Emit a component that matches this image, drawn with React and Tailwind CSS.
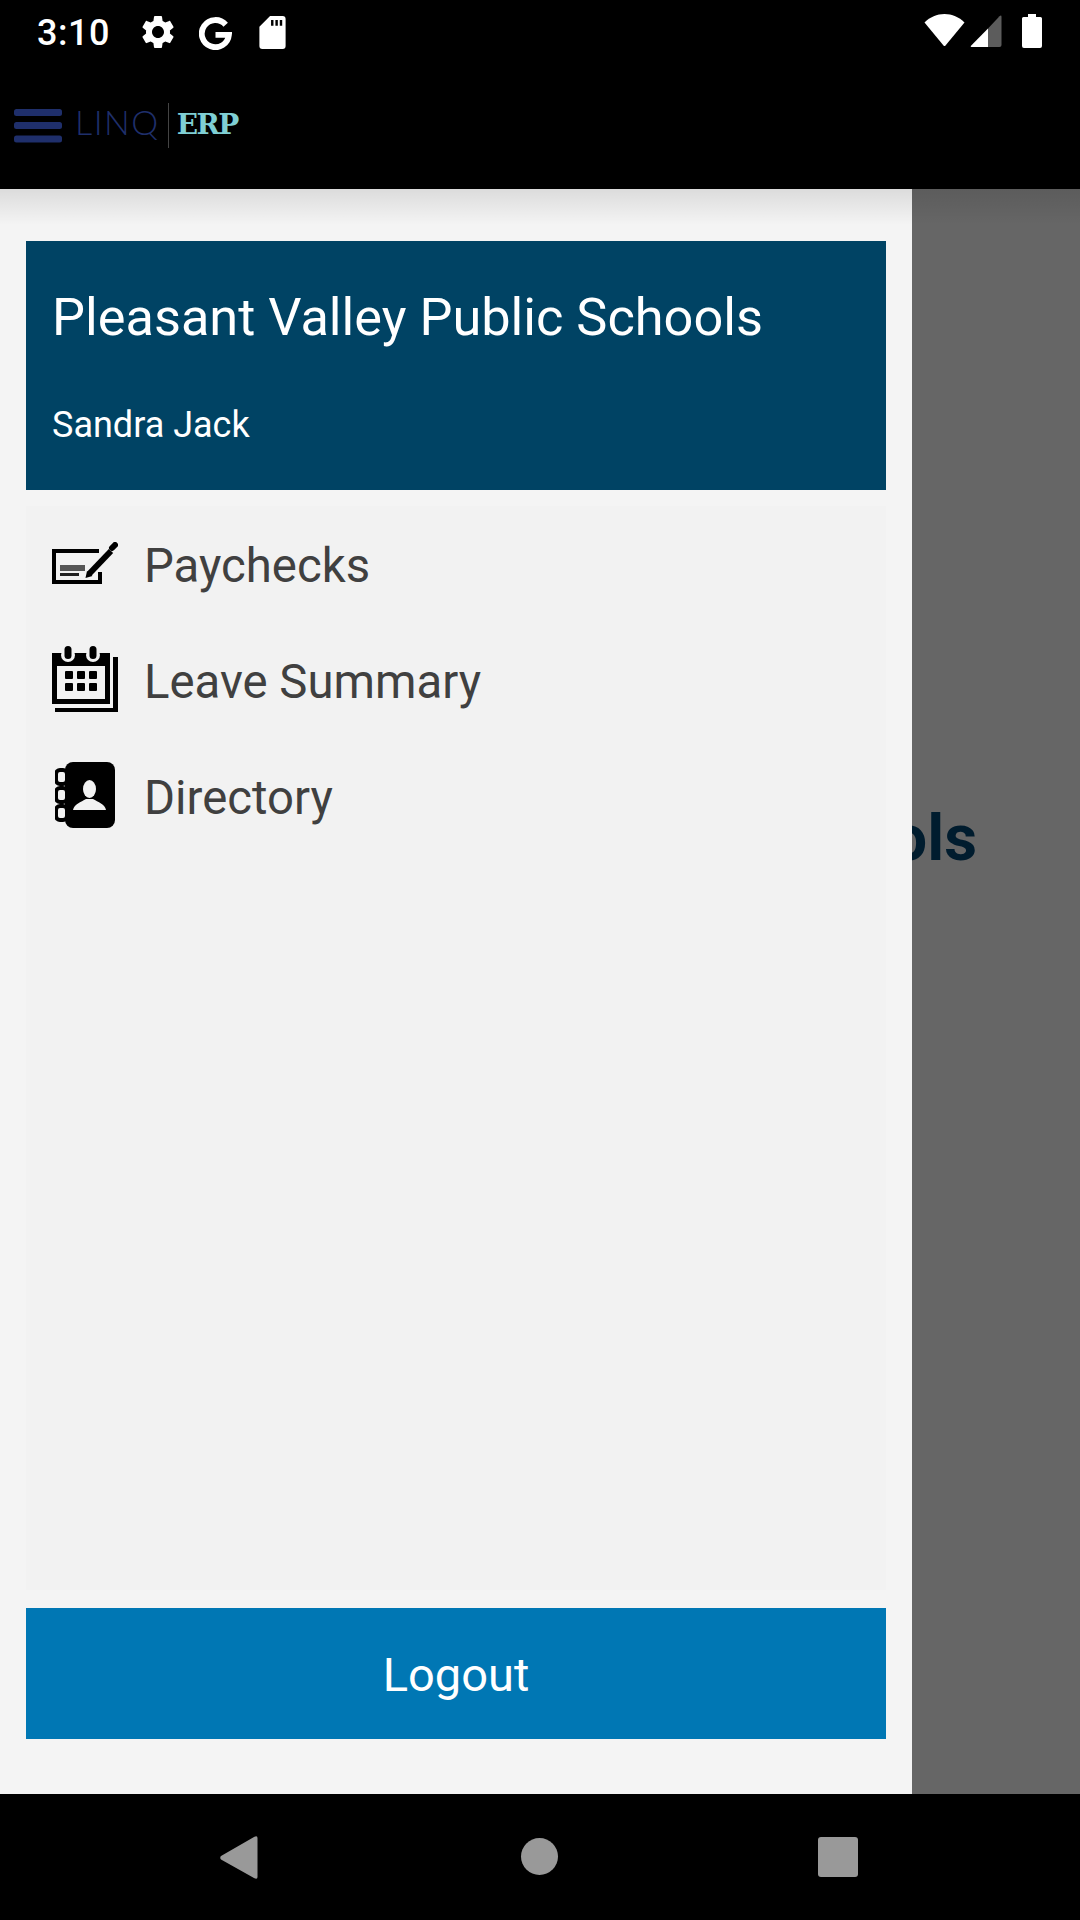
import React from "react";

const roboto = "font-['Roboto','Liberation_Sans',sans-serif]";

function Gear() {
  return (
    <svg width="40" height="40" viewBox="0 0 24 24" fill="#fff">
      <path d="M19.14 12.94c.04-.3.06-.61.06-.94 0-.32-.02-.64-.07-.94l2.03-1.58c.18-.14.23-.41.12-.61l-1.92-3.32c-.12-.22-.37-.29-.59-.22l-2.39.96c-.5-.38-1.03-.7-1.62-.94l-.36-2.54c-.04-.24-.24-.41-.48-.41h-3.84c-.24 0-.43.17-.47.41l-.36 2.54c-.59.24-1.13.57-1.62.94l-2.39-.96c-.22-.08-.47 0-.59.22L2.74 8.87c-.12.21-.08.47.12.61l2.03 1.58c-.05.3-.09.63-.09.94s.02.64.07.94l-2.03 1.58c-.18.14-.23.41-.12.61l1.92 3.32c.12.22.37.29.59.22l2.39-.96c.5.38 1.03.7 1.62.94l.36 2.54c.05.24.24.41.48.41h3.84c.24 0 .44-.17.47-.41l.36-2.54c.59-.24 1.13-.56 1.62-.94l2.39.96c.22.08.47 0 .59-.22l1.92-3.32c.12-.22.07-.47-.12-.61l-2.01-1.58zM12 15.6c-1.98 0-3.6-1.62-3.6-3.6s1.62-3.6 3.6-3.6 3.6 1.62 3.6 3.6-1.62 3.6-3.6 3.6z" />
    </svg>
  );
}

function GoogleMark() {
  return (
    <svg width="33" height="33" viewBox="0 0 34 34" fill="none" stroke="#fff" strokeWidth="6">
      <path d="M27.5 8A14 14 0 1 0 30.8 18.5H17" />
    </svg>
  );
}

function SdCard() {
  return (
    <svg width="27" height="33" viewBox="0 0 27 34">
      <path fill="#fff" fillRule="evenodd" d="M11 0H24a3 3 0 0 1 3 3V31a3 3 0 0 1-3 3H3a3 3 0 0 1-3-3V11ZM12 4V10H14.5V4ZM16.5 4V10H19V4ZM21 4V10H23.5V4Z" />
    </svg>
  );
}

function StatusRight() {
  return (
    <div className="flex items-start gap-[5px]">
      <svg width="41" height="33" viewBox="0 0 41 33" className="mt-[14px]">
        <path fill="#fff" d="M0.5 8.5C6 3 13 0 20.5 0S35 3 40.5 8.5L21.5 31.5Q20.5 32.6 19.5 31.5Z" />
      </svg>
      <svg width="32" height="32" viewBox="0 0 32 32" className="mt-[15px]">
        <path fill="#fff" d="M18 13.5V32H1.5Q0 32 1 30.8Z" />
        <path fill="#5c5c5c" d="M18 13.5L29.5 1.2Q31.5 -0.5 31.5 2V30Q31.5 32 29.5 32H18Z" />
      </svg>
      <svg width="20" height="34" viewBox="0 0 20 34" className="ml-[15px] mt-[14px]">
        <path fill="#fff" d="M6 0H14V3H18.5Q20 3 20 4.5V32Q20 34 18 34H2Q0 34 0 32V4.5Q0 3 1.5 3H6Z" />
      </svg>
    </div>
  );
}

function Hamburger() {
  return (
    <svg width="48" height="34" viewBox="0 0 48 34" fill="#1f2f6b">
      <rect width="48" height="7" rx="2.5" />
      <rect y="13" width="48" height="7" rx="2.5" />
      <rect y="26.5" width="48" height="7" rx="2.5" />
    </svg>
  );
}

function PaycheckIcon() {
  return (
    <svg width="66" height="66" viewBox="0 0 66 66" className="shrink-0 blur-[0.6px]">
      <path d="M47 20H2V51H48V41" fill="none" stroke="#000" strokeWidth="4" />
      <rect x="8" y="34" width="25" height="6" fill="#555" />
      <rect x="8" y="42" width="19" height="3" fill="#222" />
      <path d="M37 43L59 20" stroke="#000" strokeWidth="6" />
      <path d="M33.5 47L35 40L40.5 45Z" fill="#000" />
      <path d="M60 17L63 14" stroke="#000" strokeWidth="6" strokeLinecap="round" />
    </svg>
  );
}

function CalendarIcon() {
  return (
    <svg width="66" height="66" viewBox="0 0 66 66" className="mb-[2px] shrink-0 blur-[0.6px]">
      <path d="M0 7H58V58H0Z" fill="#000" />
      <rect x="5" y="20" width="48" height="33" fill="#f2f2f2" />
      <circle cx="16" cy="9" r="7" fill="#f2f2f2" />
      <circle cx="41" cy="9" r="7" fill="#f2f2f2" />
      <rect x="12.5" y="0" width="7" height="13" rx="3.5" fill="#000" />
      <rect x="37.5" y="0" width="7" height="13" rx="3.5" fill="#000" />
      <path d="M61 11H66V66H3V62H61Z" fill="#000" />
      {[13, 25, 37].map((x) =>
        [25, 37].map((y) => <rect key={`${x}-${y}`} x={x} y={y} width="8" height="8" rx="1" fill="#000" />)
      )}
    </svg>
  );
}

function DirectoryIcon() {
  return (
    <svg width="60" height="66" viewBox="0 0 60 66" className="mx-[3px] mb-[2px] shrink-0 blur-[0.6px]">
      <rect x="10" y="0" width="50" height="66" rx="8" fill="#000" />
      {[8, 26, 44].map((y) => (
        <rect key={y} x="1" y={y} width="11" height="14" rx="4" fill="#f2f2f2" stroke="#000" strokeWidth="4" />
      ))}
      <ellipse cx="34.5" cy="27" rx="6.5" ry="9" fill="#f2f2f2" />
      <path d="M18 48C19 42 26 40 31 37H38C43 40 50 42 51 48Z" fill="#f2f2f2" />
    </svg>
  );
}

function MenuRow({ icon, label }) {
  return (
    <div className="flex h-[116px] items-center gap-[26px] pl-[26px]">
      {icon}
      <span className="mt-[6px] text-[47.3px] leading-none text-[#404040]">{label}</span>
    </div>
  );
}

export default function App() {
  return (
    <div className={`flex h-[1920px] w-[1080px] flex-col overflow-hidden bg-black ${roboto}`}>
      {/* Android status bar */}
      <div className="flex h-[63px] shrink-0 items-start justify-between pr-[38px]">
        <div className="-mt-px flex items-center">
          <span className="ml-[37px] mt-[14px] text-[36px] font-medium leading-[40px] tracking-[0.5px] text-white">3:10</span>
          <div className="ml-[28px] mt-[12px]"><Gear /></div>
          <div className="ml-[21px] mt-[14px]"><GoogleMark /></div>
          <div className="mb-[2px] ml-[27px] mt-[14px]"><SdCard /></div>
        </div>
        <StatusRight />
      </div>

      {/* App toolbar with logo */}
      <div className="flex h-[126px] shrink-0 items-start pl-[14px] pt-[46px]">
        <Hamburger />
        <span className="ml-[13px] mt-[-15px] font-['Lato',sans-serif] text-[34px] font-light leading-[56px] tracking-[1.5px] text-[#1f2f6b]">LINQ</span>
        <div className="ml-[8px] mt-[-6px] h-[45px] w-px bg-[#444]" />
        <span className="ml-[8px] mt-[-12px] font-['DejaVu_Serif',serif] text-[28px] font-bold leading-[56px] tracking-[-1.5px] text-[#7fcfd4]">ERP</span>
      </div>

      {/* Page under the open drawer */}
      <div className="relative min-h-0 flex-1 bg-[#666666]">
        <div className="flex justify-end pr-[103px] pt-[618px]">
          <span className="whitespace-nowrap text-[64px] font-bold leading-none text-[#001c2e]">Schools</span>
        </div>

        {/* Navigation drawer */}
        <div className="absolute inset-y-0 left-0 flex w-[912px] flex-col bg-[#f4f4f4] px-[26px] pb-[55px] pt-[52px]">
          <div className="flex h-[249px] shrink-0 flex-col bg-[#004364] pl-[26px] pt-[47px] text-white">
            <div className="text-[52.3px] leading-[58px]">Pleasant Valley Public Schools</div>
            <div className="mt-[59px] text-[36px] leading-[40px]">Sandra Jack</div>
          </div>
          <div className="mt-[16px] flex min-h-0 flex-1 flex-col bg-[#f2f2f2]">
            <MenuRow icon={<PaycheckIcon />} label="Paychecks" />
            <MenuRow icon={<CalendarIcon />} label="Leave Summary" />
            <MenuRow icon={<DirectoryIcon />} label="Directory" />
          </div>
          <div className="mt-[18px] flex h-[131px] shrink-0 items-center justify-center bg-[#0077b4] pt-[4px] text-[47px] text-white">Logout</div>
        </div>

        {/* Toolbar shadow falling over drawer and page */}
        <div className="pointer-events-none absolute inset-x-0 top-0 h-[36px] bg-gradient-to-b from-black/10 to-transparent" />
      </div>

      {/* Android navigation bar */}
      <div className="relative flex h-[126px] shrink-0 items-start bg-black pt-[42px]">
        <svg width="38" height="43" viewBox="0 0 38 43" className="ml-[220px]">
          <path fill="#999" d="M1 23.5Q-0.5 21.5 1 20L34 1Q37.5 -1 37.5 2V41Q37.5 44 34 42Z" />
        </svg>
        <div className="ml-[263px] mt-[2px] h-[37px] w-[37px] rounded-full bg-[#999]" />
        <div className="ml-[260px] mt-[1px] h-[40px] w-[40px] rounded-[3px] bg-[#999]" />
      </div>
    </div>
  );
}
